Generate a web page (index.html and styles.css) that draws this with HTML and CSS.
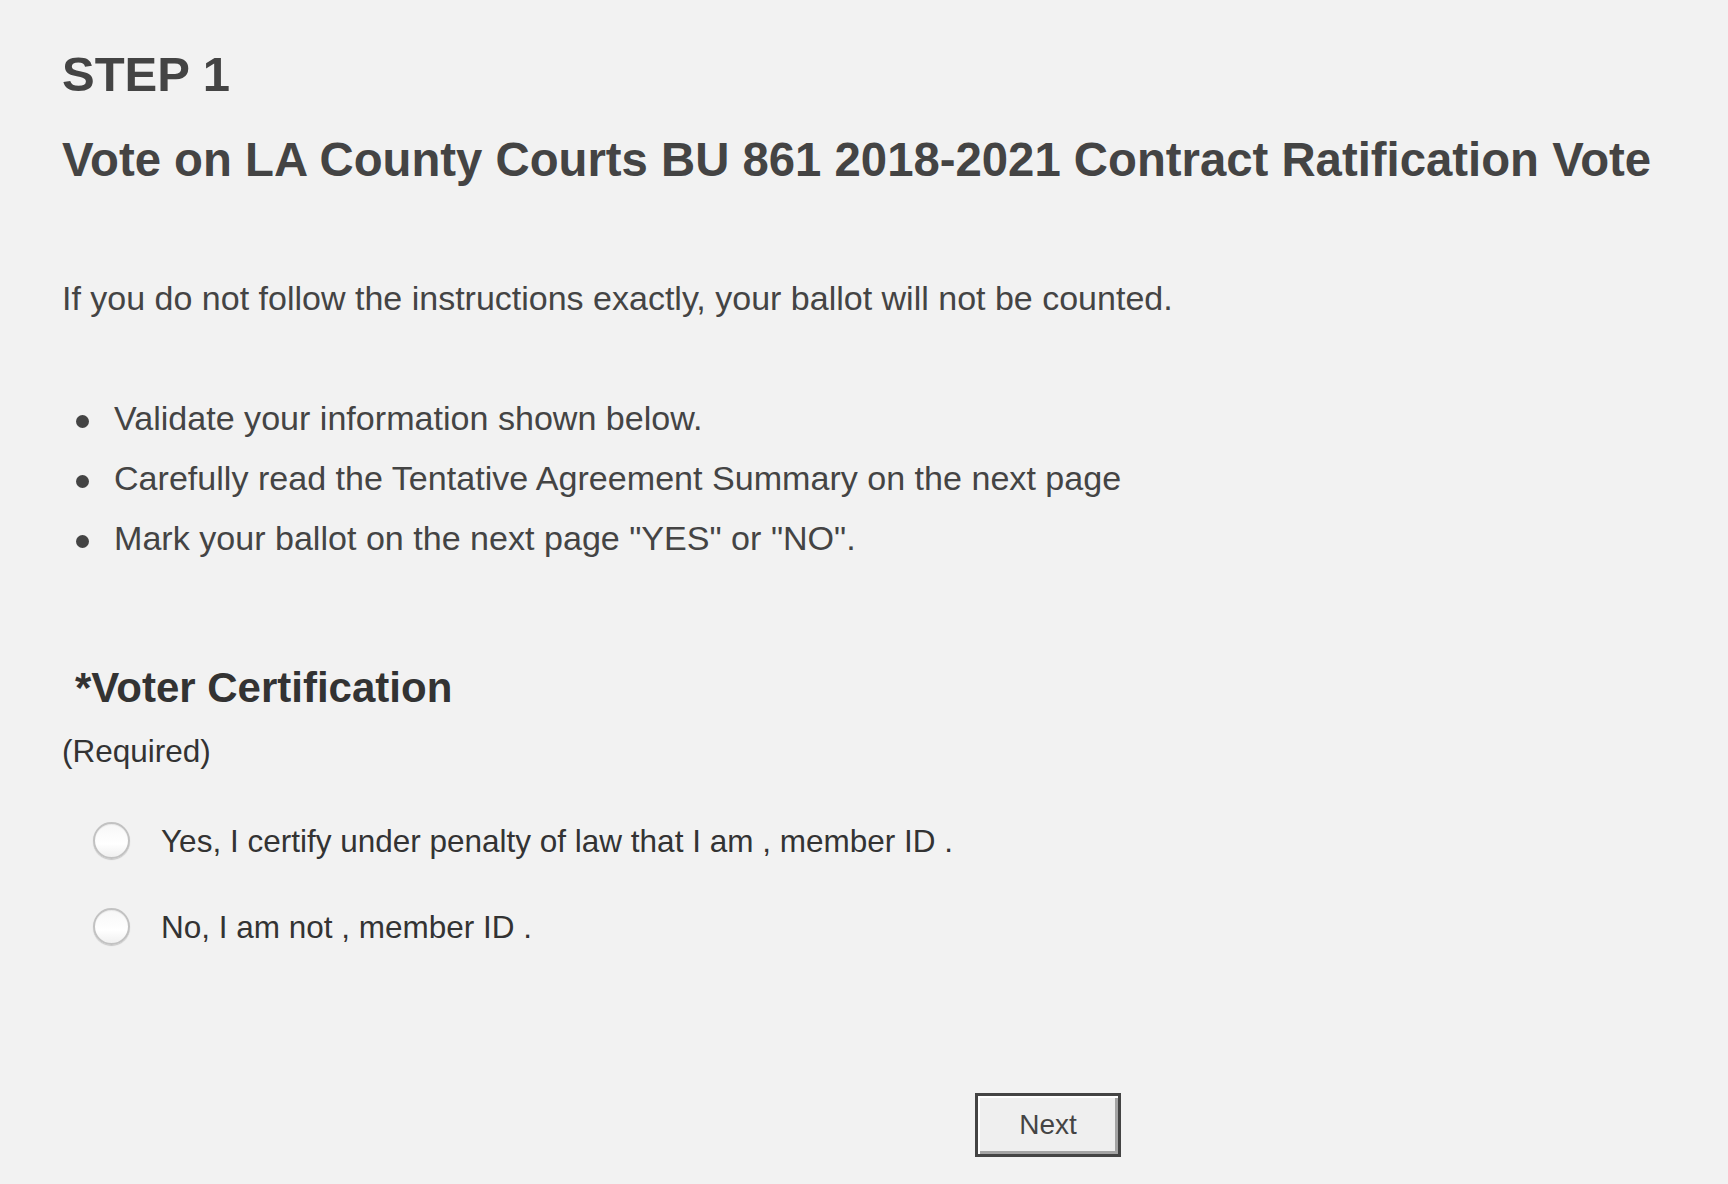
FILE: index.html
```html
<!DOCTYPE html>
<html lang="en">
<head>
<meta charset="utf-8">
<title>Step 1 - Vote</title>
<link rel="stylesheet" href="styles.css">
</head>
<body>
<main class="page">
  <h1 class="step">STEP 1</h1>
  <h2 class="title">Vote on LA County Courts BU 861 2018-2021 Contract Ratification Vote</h2>
  <p class="intro">If you do not follow the instructions exactly, your ballot will not be counted.</p>
  <ul class="steps">
    <li>Validate your information shown below.</li>
    <li>Carefully read the Tentative Agreement Summary on the next page</li>
    <li>Mark your ballot on the next page "YES" or "NO".</li>
  </ul>
  <h3 class="cert">*Voter Certification</h3>
  <div class="required">(Required)</div>
  <div class="options">
    <label class="option"><input type="radio" name="cert" class="radio"><span class="label">Yes, I certify under penalty of law that I am , member ID .</span></label>
    <label class="option"><input type="radio" name="cert" class="radio"><span class="label">No, I am not , member ID .</span></label>
  </div>
  <div class="actions">
    <button type="button" class="next">Next</button>
  </div>
</main>
</body>
</html>
```

FILE: styles.css
```css
html, body {
  margin: 0;
  padding: 0;
  background: #f2f2f2;
}

body {
  font-family: "Liberation Sans", Arial, Helvetica, sans-serif;
  color: #444;
}

.page {
  padding: 44px 0 26px 62px;
}

.step {
  margin: 0;
  font-size: 49px;
  line-height: 60px;
  font-weight: bold;
  color: #444;
}

.title {
  margin: 26px 0 0;
  font-size: 47.3px;
  line-height: 60px;
  font-weight: bold;
  color: #444;
  white-space: nowrap;
}

.intro {
  margin: 88px 0 0;
  font-size: 34px;
  line-height: 40px;
}

.steps {
  margin: 70px 0 0;
  padding: 0;
  list-style: none;
  font-size: 34.1px;
  line-height: 60px;
}

.steps li::before {
  content: "";
  display: inline-block;
  width: 13px;
  height: 13px;
  border-radius: 50%;
  background: #444;
  vertical-align: middle;
  margin: 0 25px 0 14px;
}

.cert {
  margin: 95px 0 0;
  padding-left: 13px;
  font-size: 42px;
  line-height: 50px;
  font-weight: bold;
  color: #333;
}

.required {
  margin-top: 18px;
  font-size: 31.5px;
  line-height: 40px;
  color: #333;
}

.options {
  margin-top: 50px;
  display: flex;
  flex-direction: column;
  gap: 46px;
}

.option {
  display: flex;
  align-items: flex-start;
  font-size: 31.5px;
  line-height: 40px;
  color: #333;
}

.radio {
  appearance: none;
  -webkit-appearance: none;
  margin: 1px 31px 0 31px;
  width: 37px;
  height: 37px;
  box-sizing: border-box;
  border-radius: 50%;
  border: 2px solid #c2c2c2;
  background: linear-gradient(#f7f7f7, #ffffff 60%, #f0f0f0);
  box-shadow: 0 1px 1px rgba(0, 0, 0, 0.18), inset 0 1px 1px rgba(0, 0, 0, 0.06);
  flex: none;
}

.actions {
  margin-top: 146px;
  padding-left: 913px;
}

.next {
  width: 146px;
  height: 64px;
  box-sizing: border-box;
  border: 3px solid #444;
  background: #efefef;
  box-shadow: inset 2px 2px 0 #ffffff, inset -3px -3px 0 #a4a4a4;
  font-family: "Liberation Sans", Arial, Helvetica, sans-serif;
  font-size: 28px;
  color: #444;
  padding: 0;
}
```
